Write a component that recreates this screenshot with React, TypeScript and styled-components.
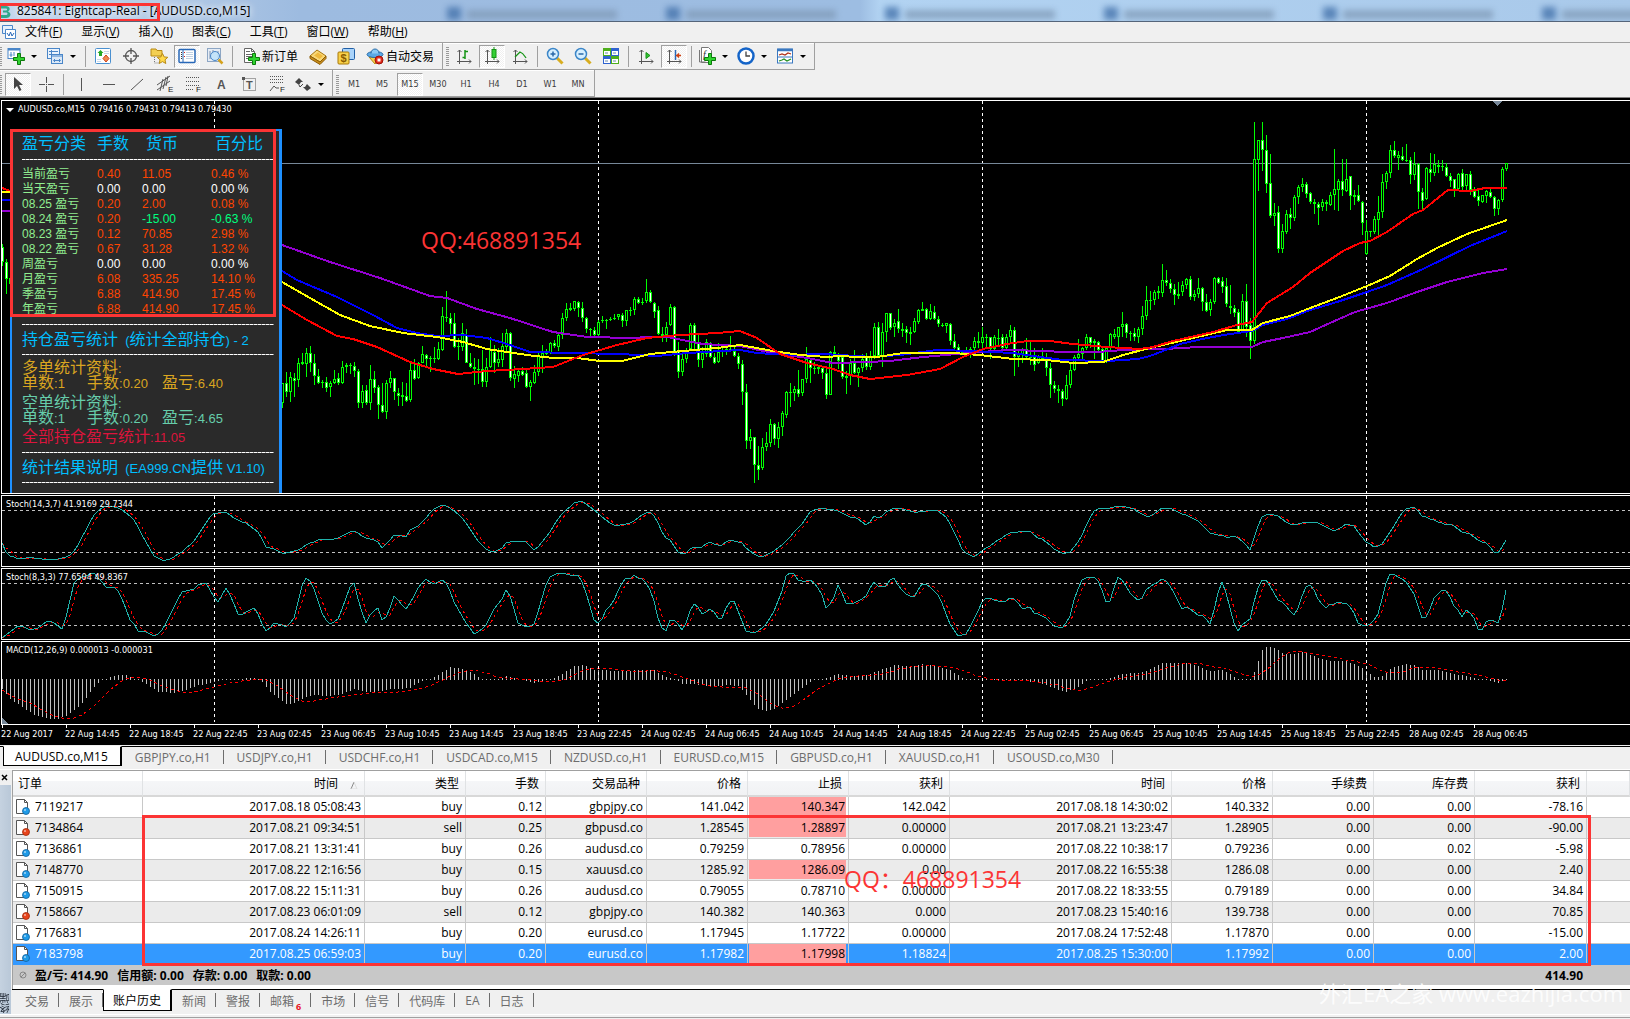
import React from "react";
import styled, { createGlobalStyle, css } from "styled-components";

const UI = '"Open Sans", "Noto Sans CJK SC", sans-serif';
const PANEL = '"Liberation Sans", "Noto Sans CJK SC", sans-serif';
const SMALL = '"DejaVu Sans Condensed", "Noto Sans CJK SC", sans-serif';
const RED = "#fc3434";

const Global = createGlobalStyle`
  *, *::before, *::after { box-sizing: border-box; }
  body { margin: 0; background: #f0f0f0; font-family: ${UI}; font-size: 12px; color: #000; overflow-x: hidden; }
  button { font: inherit; color: inherit; background: none; border: 0; padding: 0; margin: 0; }
`;

/* ------------------------------------------------------------------ data */

type Candle = { x: number; h: number; t: number; b: number; l: number; down: boolean };

// Every bar is "high bodyTop bodyBottom low", a trailing w marks a falling bar.
const BARS: { origin: number; bars: string }[] = [
  {
    origin: 230,
    bars:
      "460 460 520 535,425 460 485 500 w,425 442 487 515,430 443 452 502 w,385 398 450 470,370 395 402 405,353 370 402 440,348 370 398 425 w,373 398 438 465 w,418 438 460 462 w,450 457 460 475,440 455 473 485 w,452 458 472 502,420 446 460 462,430 444 460 465 w,393 410 460 462,398 406 411 428 w,398 404 408 432,396 408 424 440 w,418 424 520 535 w,465 484 520 535,465 480 518 525 w,405 448 518 540,423 448 473 488 w,465 472 526 566 w,460 526 545 550 w,450 460 545 566,423 445 460 475,445 445 485 510 w,475 488 497 527 w,457 496 500 527,460 498 512 515 w,393 420 510 515,388 420 446 450 w,395 398 445 447,348 373 398 398,372 376 386 410 w,378 384 386 425,350 384 386 398,335 358 388 390,230 258 360 362,183 260 265 275,248 265 283 312 w,250 280 352 355 w,325 348 352 390,280 310 350 362,296 315 398 400 w,370 398 412 413 w,385 412 418 465 w,388 416 420 462,360 418 455 472 w,383 412 455 470,320 360 412 415,345 365 400 430 w,355 388 400 412,308 348 390 412,297 310 350 362,307 310 445 452 w,408 432 448 475,420 424 438 455,412 424 434 438 w,420 430 472 473 w,450 456 470 512,405 426 458 462,370 378 426 438,345 370 382 430,358 364 372 375,335 340 368 372,330 340 348 355 w,310 315 350 362,248 265 315 328,220 238 265 272,218 235 240 242,213 213 238 243,213 215 235 262 w,215 235 265 275 w,260 265 298 308 w,293 298 300 320,292 300 316 320 w,270 276 316 318,258 270 274 278,266 270 273 297,260 267 270 273,252 264 268 270,252 253 262 270,248 256 272 290 w,240 241 272 288,230 240 243 258,202 208 240 255,200 208 220 222 w,205 215 220 225,147 186 213 218,180 186 216 220 w,215 218 245 265 w,228 240 312 315 w,290 312 318 335,275 290 316 335,222 232 286 288,228 232 365 377 w,335 360 425 443 w,372 387 425 437,355 370 387 398,280 286 358 360,280 284 340 362 w,310 340 390 410 w,350 370 390 413,328 337 372 380,335 338 380 385 w,368 380 398 402 w,340 365 395 398,345 362 366 380,345 358 363 375,318 357 362 362,350 362 378 382 w,370 378 402 418 w",
  },
  {
    origin: 240,
    bars:
      "360 373 457 495 w,432 457 602 627 w,567 592 604 627,592 592 676 729 w,618 676 690 720 w,594 622 683 690,575 610 620 632,537 553 610 620,549 553 598 615 w,546 562 596 624,513 520 562 588,453 457 524 534,429 457 459 501,438 448 458 483,390 448 461 471 w,417 418 460 468,321 358 418 429,355 360 385 429 w,365 384 387 402,375 382 388 402,380 384 400 417 w,385 400 464 477 w,333 337 464 465,318 337 341 345,338 345 362 387 w,342 352 412 418 w,393 408 413 461,357 370 405 435,330 368 400 402 w,380 384 400 441,342 357 385 396,338 348 382 390 w,333 348 380 390,249 262 348 358,246 262 348 350 w,249 277 348 381,220 220 275 306,220 220 264 270 w,237 248 262 291,207 244 268 279 w,249 267 272 291,258 268 278 309 w,261 276 281 315,234 244 275 279,207 210 247 252,186 207 212 213,204 208 236 240 w,192 214 236 240,198 216 236 240 w,228 236 253 261 w,249 254 257 260,249 250 257 279,249 252 304 315 w,282 304 325 327 w,312 322 340 342 w,333 336 339 345,321 333 337 348,321 326 334 354,291 303 325 330,276 303 310 325,261 290 310 333,282 290 294 325,290 292 326 357 w,285 292 326 330,267 294 297 321,282 292 325 330 w,282 292 325 328,255 271 292 306,261 271 350 408 w,333 343 350 381,324 327 343 369,294 327 352 355 w,306 350 353 375,324 352 374 393 w,345 352 370 372,324 350 356 360,339 352 385 408 w,370 385 436 474 w,423 436 446 459 w,435 446 452 489,447 452 478 498 w,405 436 478 480,366 391 436 444,345 352 390 393,297 342 355 358,321 325 342 363,282 292 325 330,291 292 310 324 w,297 304 308 357,303 305 330 333 w,322 326 366 369 w,322 325 366 369,279 283 325 330,267 283 290 297,261 262 290 321,216 252 262 291,249 252 280 294 w,273 278 281 303,264 280 290 303 w,261 268 290 309,198 229 268 285,138 181 229 240,153 180 183 210,150 155 181 195,138 154 158 177,72 121 158 171,90 119 130 138 w,118 130 146 159 w,132 146 166 195 w,126 163 167 177,123 135 157 168,114 118 135 147",
  },
  {
    origin: 95,
    bars:
      "543 552 607 614 w,585 598 605 618,549 580 596 610,575 580 622 648 w,597 622 648 651 w,612 622 645 663,546 550 622 627,546 548 563 567 w,546 558 575 594 w,549 574 628 636 w,570 633 640 657,630 640 653 666 w,642 650 710 711 w,597 618 710 711,567 619 695 726 w,668 690 738 792 w,81 193 738 747,136 136 196 288,81 136 166 228 w,120 166 268 294 w,177 265 364 369 w,324 355 364 393,333 352 463 474 w,387 409 463 474,345 358 412 417,339 358 368 402 w,300 307 370 378,270 277 306 327,249 268 277 291,261 268 296 309 w,291 295 322 327 w,312 322 328 357,321 328 338 390 w,312 322 337 348,315 322 328 348,291 301 331 333,162 283 301 345,252 259 286 348,192 259 284 303 w,192 253 289 291,243 244 303 345 w,285 301 306 330,270 301 317 321 w,318 322 385 420 w,375 409 478 480,408 409 412 426,363 373 412 417,303 352 376 423,237 262 352 369,228 235 262 282,150 166 233 249,138 166 182 189 w,168 181 190 225,156 184 196 198 w,147 195 198 201,186 196 241 267 w,171 206 241 255,204 208 292 342 w,279 292 317 342 w,216 220 313 315,174 222 235 261 w,177 208 235 243,195 211 215 234,195 214 217 228,204 216 244 246 w,234 244 257 276 w,252 253 283 306 w,234 238 283 288,222 235 275 288 w,237 238 274 291,228 238 284 300 w,276 288 307 309 w,285 303 319 333 w,300 301 322 324,285 289 304 324,282 292 307 309 w,303 307 343 363 w,312 316 343 360,216 222 316 321,204 205 223 228",
  },
];

const FIRST_BAR = 282;
const STEP = 4;

const candles: Candle[] = BARS.flatMap(({ origin, bars }) =>
  bars.split(",").map((bar) => {
    const parts = bar.split(" ");
    const [h, t, b, l] = parts.slice(0, 4).map((v) => Math.round(origin + Number(v) / 3));
    return { h, t, b, l, down: parts[4] === "w", x: 0 };
  })
).map((c, i) => ({ ...c, x: FIRST_BAR + i * STEP }));

const earlyCandles: Candle[] = [
  { x: 2, h: 244, t: 247, b: 262, l: 266, down: true },
  { x: 6, h: 259, t: 262, b: 279, l: 294, down: true },
  { x: 10, h: 276, t: 278, b: 284, l: 286, down: false },
];

const averages = [
  {
    color: "#9400d3",
    points:
      "282,245 330,262 380,278 430,296 447,298 477,309 510,318 553,332 587,337 633,338 647,337 667,337 703,344 740,346 773,353 807,358 833,363 867,362 890,361 923,357 957,354 1007,350 1047,351 1060,352 1098,352 1123,350 1167,349 1180,348 1200,347 1252,347 1263,342 1283,338 1310,332 1330,323 1355,312 1387,303 1417,292 1447,282 1483,273 1507,269",
  },
  {
    color: "#0000ff",
    points:
      "282,271 297,280 337,297 373,315 397,328 417,333 437,336 463,335 487,338 510,345 530,352 570,353 620,354 657,356 687,353 740,350 757,353 790,355 823,354 873,357 900,355 937,350 973,351 1013,353 1040,357 1063,360 1107,361 1138,359 1150,356 1163,351 1180,344 1207,338 1230,334 1252,331 1263,325 1287,319 1310,310 1337,302 1367,292 1387,285 1423,269 1470,246 1507,231",
  },
  {
    color: "#ffff00",
    points:
      "282,282 310,298 340,315 370,326 403,333 437,337 463,342 487,349 527,355 553,358 577,358 600,361 622,361 650,354 683,351 717,348 740,345 773,351 800,355 827,357 840,356 857,357 877,357 903,353 953,353 980,355 1013,359 1047,360 1073,363 1103,362 1123,355 1150,348 1197,337 1227,330 1252,330 1263,323 1290,316 1310,308 1337,298 1367,286 1390,276 1417,259 1437,248 1467,234 1507,220",
  },
  {
    color: "#ff0000",
    points:
      "282,305 307,320 337,336 353,339 377,347 410,362 433,369 458,374 487,371 523,369 553,367 583,355 617,345 647,338 680,335 717,333 740,331 757,338 780,354 807,363 833,369 850,375 870,379 907,375 940,369 963,357 983,349 1007,344 1027,341 1050,341 1073,344 1107,347 1140,349 1153,347 1173,341 1213,332 1237,325 1252,322 1267,303 1293,287 1310,273 1343,251 1360,243 1370,241 1387,232 1413,214 1423,210 1448,190 1470,191 1485,188 1507,188",
  },
];

type Point = [number, number];

// Oscillator tracks are stored in three parts: start, horizontal density and the samples.
const PARTS = [
  { start: 0, density: 2.851 },
  { start: 550, density: 2.904 },
  { start: 1090, density: 2.904 },
];

const track = (parts: string[]): Point[] =>
  parts.flatMap((samples, i) =>
    samples.split(" ").map((s): Point => {
      const [x, y] = s.split(",").map(Number);
      return [PARTS[i].start + x / PARTS[i].density, 490 + y / 3];
    })
  );

const sample = (pts: Point[], x: number) => {
  const i = pts.findIndex((p) => p[0] >= x);
  if (i <= 0) return i === 0 ? pts[0][1] : pts[pts.length - 1][1];
  const [a, b] = [pts[i - 1], pts[i]];
  return b[0] === a[0] ? b[1] : a[1] + ((b[1] - a[1]) * (x - a[0])) / (b[0] - a[0]);
};

const perBar = (pts: Point[]): Point[] =>
  Array.from({ length: 377 }, (_, k): Point => [2 + k * STEP, sample(pts, 2 + k * STEP)]);

const movingAverage = (pts: Point[], n: number): Point[] =>
  pts.map((p, i): Point => {
    const part = pts.slice(Math.max(0, i - n + 1), i + 1);
    return [p[0], part.reduce((sum, q) => sum + q[1], 0) / part.length];
  });

const toPoints = (pts: Point[]) => pts.map((p) => `${Math.round(p[0])},${Math.round(p[1])}`).join(" ");

const slow = perBar(
  track([
    "6,160 15,183 30,198 50,206 90,202 120,207 160,208 190,202 215,180 240,130 270,70 300,48 330,50 360,68 385,92 410,145 440,200 465,212 490,205 520,185 555,152 605,70 640,65 650,68 665,83 705,102 738,128 758,170 780,177 810,191 860,176 880,160 920,146 960,146 985,132 1010,122 1040,142 1075,152 1090,175 1125,133 1160,141 1170,117 1190,110 1240,55 1263,45 1280,52 1320,85 1365,155 1390,182 1410,187 1430,175 1445,157 1460,153 1500,155 1525,184 1560,135",
    "0,125 30,75 70,40 93,34 140,70 170,98 198,108 215,101 235,100 270,72 290,65 305,80 330,138 350,152 370,186 385,193 400,185 412,168 435,177 460,156 495,166 525,150 555,157 575,180 610,203 650,182 670,170 690,147 730,105 760,60 790,54 840,63 865,80 885,80 920,107 942,78 955,85 980,62 1003,52 1030,59 1060,66 1120,58 1150,80 1180,140 1200,186 1230,202 1270,172 1305,148 1340,125 1395,124 1410,140 1430,147 1465,178 1490,190 1512,186 1540,145 1560,100",
    "0,85 12,62 25,55 50,55 85,48 120,54 165,79 180,77 205,55 230,52 270,72 310,90 350,130 365,135 380,133 400,142 420,137 440,150 465,181 485,115 500,80 515,72 545,77 585,106 630,94 665,99 710,123 745,102 765,107 800,155 828,172 850,160 885,105 905,70 920,56 942,52 965,78 1035,105 1048,100 1080,125 1100,130 1130,153 1155,162 1172,185 1187,190 1210,145",
  ])
);

const fast = perBar(
  track([
    "6,443 50,408 70,410 88,422 112,412 125,400 145,391 180,419 195,350 213,270 240,258 268,250 285,270 302,290 330,290 350,330 373,398 385,405 395,425 410,422 443,440 460,425 490,365 518,305 555,295 565,283 588,278 605,315 622,337 645,292 665,335 680,375 695,375 705,362 725,355 740,380 750,412 760,425 783,397 818,412 840,380 860,290 873,262 890,280 920,375 935,400 945,403 965,385 985,330 1000,283 1010,278 1025,345 1045,403 1057,370 1078,355 1090,392 1105,375 1125,313 1145,345 1160,358 1170,335 1185,312 1195,285 1215,268 1238,283 1260,270 1275,280 1298,345 1330,400 1353,433 1385,407 1410,355 1430,330 1445,293 1458,330 1478,402 1502,412 1525,400 1545,325 1562,268",
    "0,260 25,247 60,256 83,254 98,285 128,390 140,400 150,388 165,355 180,345 205,285 222,262 235,268 247,252 258,268 270,268 285,285 303,335 317,400 328,418 338,422 350,385 365,392 385,424 400,385 410,352 420,341 432,352 443,376 466,355 478,368 490,388 500,385 513,350 525,331 537,332 550,375 570,424 595,428 610,420 628,402 650,365 675,300 687,250 708,250 722,274 757,270 778,292 790,315 803,358 825,322 837,282 860,340 875,343 915,322 930,292 942,275 955,290 978,287 990,265 1000,265 1015,292 1037,317 1057,322 1082,278 1095,282 1130,318 1165,410 1187,440 1210,430 1225,400 1258,330 1270,322 1300,333 1325,334 1340,322 1352,328 1372,355 1395,352 1405,368 1440,383 1465,408 1490,415 1510,378 1525,315 1545,270 1562,260",
    "0,260 15,260 30,285 48,340 60,333 72,285 83,256 95,272 117,312 138,332 150,325 165,297 190,280 208,268 220,272 240,300 268,360 280,350 317,378 327,373 350,403 375,295 385,272 397,315 418,400 432,427 443,400 458,393 467,385 480,318 492,280 502,265 515,273 545,328 560,338 593,376 607,348 620,305 632,283 643,284 665,332 687,355 698,340 712,343 723,335 735,342 745,337 768,372 780,402 800,410 818,400 838,370 852,310 862,270 873,250 885,253 920,278 943,315 965,388 980,378 1000,320 1025,298 1037,303 1060,355 1070,360 1081,382 1094,355 1117,387 1129,424 1140,418 1152,393 1163,388 1187,400 1200,345 1210,288",
  ])
);

const macd = perBar(
  track([
    "6,600 30,632 65,655 100,680 130,688 165,690 190,680 215,660 240,635 270,590 290,572 330,555 365,556 385,570 410,582 450,608 490,612 530,603 560,590 610,580 650,570 725,563 740,570 770,610 815,645 840,642 870,625 895,617 930,622 975,615 1010,600 1045,610 1090,605 1120,600 1165,598 1200,578 1240,560 1285,531 1330,540 1375,567 1410,570 1445,558 1470,567 1500,577 1525,582 1560,570",
    "0,567 25,558 70,528 95,525 130,540 210,543 300,539 330,558 360,568 385,586 420,586 470,594 510,588 550,592 580,632 605,662 630,666 655,658 690,630 730,600 765,570 800,566 835,552 870,558 925,553 970,535 1005,524 1045,530 1080,522 1115,528 1160,540 1200,565 1240,570 1340,570 1380,575 1430,584 1465,598 1495,609 1530,598 1562,570",
    "0,567 45,567 100,551 150,548 210,518 290,519 345,543 385,540 430,567 467,575 478,540 500,480 513,471 535,474 560,490 590,494 620,486 660,502 700,514 740,512 785,530 805,545 825,562 845,560 875,535 915,522 945,527 965,540 1020,541 1060,552 1110,562 1140,570 1187,582 1200,572 1210,569",
  ])
);

const DAY_LINES = [214, 598, 982, 1366];

const AXIS = [
  "22 Aug 2017", "22 Aug 14:45", "22 Aug 18:45", "22 Aug 22:45",
  ...["23", "24", "25"].flatMap((d) => ["02", "06", "10", "14", "18", "22"].map((h) => `${d} Aug ${h}:45`)),
  "28 Aug 02:45", "28 Aug 06:45",
];

const STATS: [string, string, string, string, string][] = [
  ["当前盈亏", "0.40", "11.05", "0.46 %", "up"],
  ["当天盈亏", "0.00", "0.00", "0.00 %", "flat"],
  ["08.25 盈亏", "0.20", "2.00", "0.08 %", "up"],
  ["08.24 盈亏", "0.20", "-15.00", "-0.63 %", "down"],
  ["08.23 盈亏", "0.12", "70.85", "2.98 %", "up"],
  ["08.22 盈亏", "0.67", "31.28", "1.32 %", "up"],
  ["周盈亏", "0.00", "0.00", "0.00 %", "flat"],
  ["月盈亏", "6.08", "335.25", "14.10 %", "up"],
  ["季盈亏", "6.88", "414.90", "17.45 %", "up"],
  ["年盈亏", "6.88", "414.90", "17.45 %", "up"],
];

const CHART_TABS = [
  "AUDUSD.co,M15", "GBPJPY.co,H1", "USDJPY.co,H1", "USDCHF.co,H1", "USDCAD.co,M15",
  "NZDUSD.co,H1", "EURUSD.co,M15", "GBPUSD.co,H1", "XAUUSD.co,H1", "USOUSD.co,M30",
];

const COLUMNS: [string, number][] = [
  ["订单", 130], ["时间", 222], ["类型", 101], ["手数", 80], ["交易品种", 101], ["价格", 101], ["止损", 101],
  ["获利", 101], ["时间", 222], ["价格", 101], ["手续费", 101], ["库存费", 101], ["获利", 112],
];

const ORDERS = [
  ["7119217", "2017.08.18 05:08:43", "buy", "0.12", "gbpjpy.co", "141.042", "140.347", "142.042", "2017.08.18 14:30:02", "140.332", "0.00", "0.00", "-78.16"],
  ["7134864", "2017.08.21 09:34:51", "sell", "0.25", "gbpusd.co", "1.28545", "1.28897", "0.00000", "2017.08.21 13:23:47", "1.28905", "0.00", "0.00", "-90.00"],
  ["7136861", "2017.08.21 13:31:41", "buy", "0.26", "audusd.co", "0.79259", "0.78956", "0.00000", "2017.08.22 10:38:17", "0.79236", "0.00", "0.02", "-5.98"],
  ["7148770", "2017.08.22 12:16:56", "buy", "0.15", "xauusd.co", "1285.92", "1286.09", "0.00", "2017.08.22 16:55:38", "1286.08", "0.00", "0.00", "2.40"],
  ["7150915", "2017.08.22 15:11:31", "buy", "0.26", "audusd.co", "0.79055", "0.78710", "0.00000", "2017.08.22 18:33:55", "0.79189", "0.00", "0.00", "34.84"],
  ["7158667", "2017.08.23 06:01:09", "sell", "0.12", "gbpjpy.co", "140.382", "140.363", "0.000", "2017.08.23 15:40:16", "139.738", "0.00", "0.00", "70.85"],
  ["7176831", "2017.08.24 14:26:11", "buy", "0.20", "eurusd.co", "1.17945", "1.17722", "0.00000", "2017.08.24 17:52:48", "1.17870", "0.00", "0.00", "-15.00"],
  ["7183798", "2017.08.25 06:59:03", "buy", "0.20", "eurusd.co", "1.17982", "1.17998", "1.18824", "2017.08.25 15:30:00", "1.17992", "0.00", "0.00", "2.00"],
];
const STOPPED = [0, 1, 3, 7];
const SELECTED = 7;

/* ---------------------------------------------------------------- window */

const Window = styled.div`
  display: flex;
  flex-direction: column;
  min-height: 100vh;
  position: relative;
  overflow: hidden;
`;

const TitleBar = styled.header`
  position: relative;
  display: flex;
  align-items: center;
  height: 22px;
  overflow: hidden;
  border-bottom: 1px solid #55657a;
  background: linear-gradient(90deg, #c3d6ec 0, #b4cbe6 160px, #9dbbe0 300px, #9dbde2 860px, #b2d3f2 880px, #a9c9ea 100%);
`;

const GhostTabs = styled.div`
  position: absolute;
  inset: 7px 0 0 447px;
  display: flex;
  filter: blur(3px);
  opacity: 0.75;
`;

const GhostTab = styled.div`
  flex: none;
  width: 219px;
  display: flex;
  gap: 6px;
  &::before { content: ""; width: 14px; height: 13px; background: #3f6ea8; }
  &::after { content: ""; width: 150px; height: 9px; margin-top: 3px; background: #7f99b6; }
`;

const Title = styled.h1`
  position: relative;
  margin: 0;
  padding: 0 8px 0 17px;
  font-size: 12px;
  font-weight: 400;
  line-height: 20px;
  word-break: keep-all;
  text-shadow: 0 0 6px #fff, 0 0 8px #fff;
`;

const TitleLogo = styled.svg`
  position: absolute;
  left: 0;
  top: 4px;
`;

const TitleMark = styled.div`
  position: absolute;
  left: 0;
  top: 3px;
  width: 160px;
  height: 19px;
  border: 3px solid ${RED};
  border-left-width: 1px;
`;

const MenuBar = styled.nav`
  display: flex;
  align-items: center;
  height: 21px;
  border-bottom: 1px solid #a0a0a0;
`;

const MenuList = styled.div`
  display: flex;
  gap: 19px;
  padding-left: 7px;
`;

const MenuItem = styled.button`
  line-height: 18px;
  u { text-underline-offset: 1px; }
`;

const ToolRow = styled.div<{ $low?: boolean }>`
  display: flex;
  height: 27px;
  ${(p) => p.$low && css`${ToolGroup} { padding-top: 2px; }`}
`;

const ToolGroup = styled.div`
  display: flex;
  align-items: center;
  padding-right: 2px;
  border-right: 1px solid #a0a0a0;
  border-bottom: 1px solid #a0a0a0;
  box-shadow: inset 0 1px 0 #fff;
`;

const Grip = styled.span<{ $wide?: boolean }>`
  width: ${(p) => (p.$wide ? 7 : 4)}px;
  height: 19px;
  background: repeating-linear-gradient(#999 0 1px, transparent 1px 2px) ${(p) => (p.$wide ? 3 : -1)}px 0 / 3px 100% no-repeat;
`;

const Divider = styled.span`
  width: 7px;
  height: 21px;
  background: linear-gradient(#a0a0a0, #a0a0a0) 3px 0 / 1px 100% no-repeat;
`;

const ToolButton = styled.button<{ $pressed?: boolean; $width?: number; $drop?: boolean }>`
  display: flex;
  align-items: center;
  justify-content: ${(p) => (p.$drop ? "flex-start" : "center")};
  gap: 2px;
  width: ${(p) => p.$width ?? 26}px;
  height: 23px;
  margin: 0 1px;
  padding-left: ${(p) => (p.$drop ? 1 : 0)}px;
  white-space: nowrap;
  border: 1px solid transparent;
  ${(p) =>
    p.$pressed &&
    css`
      border-color: #a0a0a0 #fff #fff #a0a0a0;
      background: repeating-conic-gradient(#fff 0 25%, #f0f0f0 0 50%) 0 0 / 2px 2px;
    `}
`;

const PeriodButton = styled(ToolButton)`
  font-family: ${SMALL};
  font-size: 9px;
  color: #3c3c3c;
`;

const Caret = styled.i`
  margin-left: 4px;
  border: 3px solid transparent;
  border-top-color: #000;
  border-bottom: 0;
`;

/* ----------------------------------------------------------------- chart */

const ChartArea = styled.main`
  display: flex;
  flex-direction: column;
  gap: 1px;
  padding: 2px 0 0 1px;
  border-top: 1px solid #808080;
  background: #000;
  color: #fff;
  overflow: hidden;
`;

const Pane = styled.section<{ $height: number }>`
  position: relative;
  height: ${(p) => p.$height}px;
  border: solid #fff;
  border-width: 1px 0 1px 1px;
  overflow: hidden;
`;

const PaneSvg = styled.svg`
  display: block;
  width: 100%;
  height: 100%;
  shape-rendering: crispEdges;
`;

const PaneTitle = styled.h2`
  position: absolute;
  left: 4px;
  top: 2px;
  display: flex;
  align-items: center;
  gap: 4px;
  margin: 0;
  font-family: ${SMALL};
  font-size: 9px;
  font-weight: 400;
  line-height: 13px;
`;

const TitleArrow = styled.i`
  border: 4px solid transparent;
  border-top-color: #fff;
  border-bottom: 0;
`;

const TimeAxis = styled.div`
  display: flex;
  height: 20px;
  margin-top: -1px;
  overflow: hidden;
`;

const TimeLabel = styled.span`
  flex: none;
  width: 64px;
  font-family: ${SMALL};
  font-size: 9px;
  line-height: 12px;
  white-space: nowrap;
  &::before { content: ""; display: block; width: 1px; height: 3px; margin-left: 1px; background: #fff; }
`;

const Contact = styled.p<{ $x: number; $y: number }>`
  position: absolute;
  left: ${(p) => p.$x}px;
  top: ${(p) => p.$y}px;
  margin: 0;
  font-size: 23px;
  line-height: 32px;
  white-space: nowrap;
  color: ${RED};
`;

/* ----------------------------------------------------------- stats panel */

const Panel = styled.aside`
  position: absolute;
  left: 8px;
  top: 28px;
  bottom: 0;
  width: 272px;
  padding-left: 10px;
  border: solid #1e90ff;
  border-width: 2px 3px 0 2px;
  background: #2a2a2a;
  font-family: ${PANEL};
  overflow: hidden;
`;

const PanelMark = styled.div`
  position: absolute;
  left: 8px;
  top: 28px;
  width: 266px;
  height: 188px;
  border: 3px solid ${RED};
`;

const Dashes = styled.hr`
  width: 252px;
  height: 1px;
  margin: 0;
  border: 0;
  background: repeating-linear-gradient(90deg, #fff 0 3px, #999 3px 4px);
`;

const StatsTable = styled.table`
  width: 251px;
  table-layout: fixed;
  border-collapse: collapse;
  font-size: 12px;
  margin-bottom: 7px;
  th, td { padding: 0; text-align: left; font-weight: 400; white-space: nowrap; }
`;

const StatsHead = styled.th<{ $inset?: boolean }>`
  height: 28px;
  font-size: 16px;
  line-height: 26px;
  vertical-align: top;
  color: #00bfff;
  && { padding-left: ${(p) => (p.$inset ? 4 : 0)}px; }
`;

const tone: Record<string, string> = { up: "#ff4500", flat: "#fff", down: "#00ff7f" };

const StatCell = styled.td<{ $tone: string }>`
  height: 15px;
  line-height: 15px;
  color: ${(p) => tone[p.$tone]};
`;

const StatName = styled.th`
  height: 15px;
  line-height: 15px;
  color: #90ee90;
`;

const DashRow = styled.td`
  height: 8px;
  vertical-align: top;
  line-height: 1px;
`;

const PanelHeading = styled.h3`
  margin: 0;
  font-size: 16px;
  font-weight: 400;
  line-height: 29px;
  white-space: pre;
  color: #00bfff;
`;

const Latin = styled.span`
  font-size: 13px;
  line-height: 0;
`;

const Summary = styled.div<{ $color: string }>`
  margin-top: 5px;
  color: ${(p) => p.$color};
`;

const SummaryRow = styled.div`
  display: grid;
  grid-template-columns: 65px 75px 1fr;
  font-size: 16px;
  line-height: 15px;
  white-space: nowrap;
`;

const Total = styled(Summary)`
  margin: 4px 0 7px;
  font-size: 16px;
  line-height: 16px;
`;

/* ------------------------------------------------------------------ tabs */

const ChartTabs = styled.nav`
  display: flex;
  height: 24px;
  margin-top: 1px;
  padding-left: 3px;
  border-top: 1px solid #000;
  box-shadow: inset 0 -1px 0 #fff;
`;

const tabBase = css<{ $active?: boolean }>`
  display: flex;
  align-items: center;
  white-space: nowrap;
  color: #6d6d6d;
  background: linear-gradient(#6d6d6d, #6d6d6d) 100% 3px / 1px 14px no-repeat;
  ${(p) =>
    p.$active &&
    css`
      margin-top: -1px;
      color: #000;
      background: #fff;
      border: 1px solid #000;
      border-top-color: #fff;
      border-right-width: 2px;
    `}
`;

const ChartTab = styled.button<{ $active?: boolean }>`
  ${tabBase}
  height: ${(p) => (p.$active ? 20 : 19)}px;
  padding: 1px ${(p) => (p.$active ? 12 : 13)}px 0 ${(p) => (p.$active ? 11 : 13)}px;
`;

/* ------------------------------------------------------------------ dock */

const Dock = styled.section`
  position: relative;
  display: grid;
  grid-template-columns: 12px minmax(0, 1fr);
`;

const Side = styled.div`
  display: flex;
  flex-direction: column;
  align-items: flex-start;
`;

const CloseButton = styled.button`
  height: 15px;
  padding-left: 1px;
  display: flex;
  align-items: center;
`;

const SideLabel = styled.div`
  flex: 1;
  width: 11px;
  display: flex;
  padding-top: 1px;
  writing-mode: vertical-rl;
  transform: rotate(180deg);
  font-size: 10px;
  line-height: 11px;
  color: #1c2430;
  background: linear-gradient(270deg, #c5d2e0, #b9c8d8);
`;

const Main = styled.div`
  border-top: 1px solid #a0a0a0;
  border-left: 1px solid #a0a0a0;
  background: #fff;
`;

const Orders = styled.table`
  width: 100%;
  table-layout: fixed;
  border-collapse: separate;
  border-spacing: 0;
  text-align: right;
  white-space: nowrap;
  th, td { font-weight: 400; }
`;

const HeadCell = styled.th<{ $first?: boolean }>`
  height: 26px;
  padding: 2px 6px 0 5px;
  line-height: 20px;
  text-align: ${(p) => (p.$first ? "left" : "right")};
  border-right: 1px solid #e0e2e4;
  border-bottom: 2px solid #d8d8d8;
  background: linear-gradient(#fff 0 40%, #f5f6f8 40%, #f1f2f4);
`;

const SortMark = styled.svg`
  margin: 0 0 -1px 12px;
`;

const Row = styled.tr<{ $odd: boolean; $selected: boolean }>`
  background: ${(p) => (p.$selected ? "#3399ff" : p.$odd ? "#ebebeb" : "#fff")};
  color: ${(p) => (p.$selected ? "#fff" : "#000")};
`;

const Cell = styled.td<{ $hit?: boolean; $blank?: boolean }>`
  height: 21px;
  padding: 0 3px 0 0;
  line-height: 18px;
  border-right: ${(p) => (p.$blank ? 0 : 1)}px solid #c8c8c8;
  border-bottom: 1px solid #c8c8c8;
  tr:last-child > & { border-bottom-color: #3399ff; }
  ${(p) =>
    p.$hit &&
    css`
      color: #000;
      background: linear-gradient(#ff9f9f, #ff9f9f) 1px 0 / calc(100% - 3px) 19px no-repeat;
    `}
`;

const Ticket = styled.span`
  display: flex;
  align-items: center;
  gap: 5px;
  padding-left: 3px;
`;

const Balance = styled.div`
  display: flex;
  align-items: center;
  height: 20px;
  padding-left: 6px;
  gap: 8px;
  font-weight: 700;
  background: #c8c8c8;
`;

const BalanceItems = styled.span`
  display: flex;
  gap: 9px;
`;

const BalanceTotal = styled.span`
  margin-left: auto;
  padding-right: 47px;
`;

const DockTabs = styled.nav`
  display: flex;
  height: 25px;
  margin: 4px 0 0 -1px;
  padding-left: 3px;
  border-top: 1px solid #000;
  background: #f0f0f0;
`;

const DockTab = styled.button<{ $active?: boolean }>`
  ${tabBase}
  height: ${(p) => (p.$active ? 22 : 21)}px;
  padding: 0 ${(p) => (p.$active ? 9 : 10)}px;
`;

const Count = styled.sub`
  margin-left: 2px;
  font-size: 9px;
  font-weight: 700;
  line-height: 9px;
  align-self: flex-end;
  color: #e81123;
`;

const StatusLine = styled.footer`
  flex: 1;
  min-height: 5px;
  border-top: 1px solid #fff;
  box-shadow: inset 0 2px 0 #f0f0f0, inset 0 3px 0 #a0a0a0;
`;

const OrdersMark = styled.div`
  position: absolute;
  left: 142px;
  top: 45px;
  width: 1449px;
  height: 151px;
  border: 3px solid ${RED};
`;

const Watermark = styled.p`
  position: absolute;
  right: 7px;
  bottom: 12px;
  margin: 0;
  font-size: 22px;
  line-height: 28px;
  white-space: nowrap;
  color: rgba(255, 255, 255, 0.85);
`;

/* ----------------------------------------------------------------- icons */

const Icon = ({ children, size = 18 }: { children: React.ReactNode; size?: number }) => (
  <svg width={size} height={size} viewBox="0 0 18 18" aria-hidden="true">
    {children}
  </svg>
);

const Plus = () => (
  <path d="M10.5 6.500h3v4h4v3h-4v4h-3v-4h-4v-3h4z" fill="#2fd32f" stroke="#0b7a0b" />
);

const AxisLines = () => (
  <path d="M4.500 3v14M2 14.500h14M2.500 5l2-2 2 2M14 12.500l2 2-2 2" fill="none" stroke="#555" />
);

const icons: Record<string, React.ReactNode> = {
  newChart: (
    <Icon>
      <rect x="1" y="1.500" width="12" height="10" fill="#fff" stroke="#4a86c8" />
      <path d="M1 2.500h12" stroke="#4a86c8" strokeWidth="2" />
      <path d="M4 5v5M2.500 8h3M7 5v4" stroke="#4a86c8" />
      <Plus />
    </Icon>
  ),
  windows: (
    <Icon>
      <rect x="1.500" y="1.500" width="12" height="10" fill="#eaf3fd" stroke="#4a86c8" />
      <path d="M3 4.500h9M5.500 3v5M3 7.500h8" stroke="#4a86c8" />
      <rect x="5.500" y="7.500" width="11" height="9" fill="#dbe9f8" stroke="#4a86c8" />
      <path d="M6 9h10M8 13.500h6M9 12l-1.500 1.500L9 15M13 12l1.500 1.500L13 15" fill="none" stroke="#4a86c8" />
    </Icon>
  ),
  market: (
    <Icon>
      <rect x="1.500" y="1.500" width="15" height="15" rx="1" fill="#fff" stroke="#4a90d0" />
      <path d="M10 4.500h5M10 6.500h5M3 12.500h4M3 14.500h4" stroke="#c9d9ea" />
      <path d="M6.500 3l3 3h-1.500v3h-3V6H3.500z" fill="#25a825" />
      <path d="M12 8l3 3.500-3 3.500-3-3.500z" fill="#f08a50" stroke="#d0431a" />
    </Icon>
  ),
  target: (
    <Icon>
      <circle cx="9" cy="9" r="5.500" fill="none" stroke="#555" strokeWidth="1.300" />
      <path d="M9 1v6M9 11v6M1 9h6M11 9h6" stroke="#555" strokeWidth="1.300" />
    </Icon>
  ),
  favourites: (
    <Icon>
      <path d="M1 2h5l1 1.500h5V9H1z" fill="#f3cf52" stroke="#b88a14" />
      <path d="M4.500 10v6h5" fill="none" stroke="#777" strokeDasharray="1 1" />
      <path d="M12.500 6.500l1.600 3.400 3.700.4-2.800 2.500.8 3.700-3.300-1.900-3.300 1.900.8-3.700-2.800-2.500 3.700-.4z" fill="#ffd94a" stroke="#b88a14" />
    </Icon>
  ),
  navigator: (
    <Icon>
      <rect x="1" y="2.500" width="16" height="13" rx="1" fill="#fff" stroke="#2868b8" strokeWidth="1.500" />
      <path d="M5 3v12" stroke="#2868b8" />
      <path d="M8 5.500h7M8 7.500h7M8 9.500h7M8 11.500h7" stroke="#c0d0e2" />
      <path d="M3 5.500h1M3 7.500h1M3 9.500h1M3 11.500h1" stroke="#333" />
      <path d="M6 5.500h1M6 9.500h1" stroke="#e02020" />
    </Icon>
  ),
  tester: (
    <Icon>
      <rect x="1.500" y="1.500" width="13" height="13" fill="#e5ecf5" stroke="#8da6c4" />
      <path d="M4 4v8M7 3v4M12 4v7" stroke="#7d92ae" />
      <circle cx="9" cy="9" r="4.500" fill="#bfe3fa" fillOpacity=".85" stroke="#4a86c8" />
      <path d="M12.500 12.500l4 4" stroke="#d5a21e" strokeWidth="2.500" />
    </Icon>
  ),
  order: (
    <Icon>
      <path d="M2.500 1.500h7l3 3v11h-10z" fill="#fff" stroke="#666" />
      <path d="M9.500 1.500v3h3M4 4.500h4M4 7.500h6M4 9.500h6M4 11.500h3" fill="none" stroke="#666" />
      <Plus />
    </Icon>
  ),
  gold: (
    <Icon>
      <path d="M1 9l7-6 9 6-6 6z" fill="#f9d877" stroke="#a8750c" />
      <path d="M1 9l10 6 6-6v2.500L11 17.500 1 11.500z" fill="#c98d1a" stroke="#8c5c06" />
      <path d="M5 8.500l4-3 5 3.500-3.500 3z" fill="#f0b93c" />
    </Icon>
  ),
  dollar: (
    <Icon>
      <rect x="5.500" y="1.500" width="12" height="11" rx="1" fill="#a9d3fa" stroke="#215fa6" />
      <rect x="1" y="5" width="11" height="12" rx="1" fill="#f8d14a" stroke="#a87808" />
      <text x="3.500" y="15" fontFamily="Liberation Sans" fontWeight="700" fontSize="11" fill="#8a5c00">$</text>
    </Icon>
  ),
  robot: (
    <Icon>
      <path d="M3 10l6 7 6-7z" fill="#f5cf4c" stroke="#b88a14" />
      <ellipse cx="9" cy="7.500" rx="8" ry="3" fill="#5ba9e6" stroke="#276aa6" />
      <path d="M5 6.500c0-6 8-6 8 0" fill="#8ccaf5" stroke="#276aa6" />
      <circle cx="13" cy="13" r="4" fill="#e02a1a" stroke="#a01208" />
      <rect x="11.500" y="11.500" width="3" height="3" fill="#fff" />
    </Icon>
  ),
  bars: (
    <Icon>
      <AxisLines />
      <path d="M10 3v9M10 4.500h3M7.500 10.500H10" stroke="#149414" strokeWidth="1.500" />
    </Icon>
  ),
  candle: (
    <Icon>
      <AxisLines />
      <path d="M11 0v13" stroke="#149414" />
      <rect x="9" y="2.500" width="4" height="8" fill="#34d034" stroke="#149414" />
    </Icon>
  ),
  line: (
    <Icon>
      <AxisLines />
      <path d="M4 10l5-5c3 1 4 3 6 6" fill="none" stroke="#149414" strokeWidth="1.300" />
    </Icon>
  ),
  zoomIn: (
    <Icon>
      <path d="M11 11l5.500 5.500" stroke="#d8ad20" strokeWidth="3" />
      <circle cx="7" cy="7" r="5.500" fill="#d6efff" stroke="#3c86c8" strokeWidth="1.500" />
      <path d="M4.500 7h5M7 4.500v5" stroke="#2868a8" strokeWidth="1.500" />
    </Icon>
  ),
  zoomOut: (
    <Icon>
      <path d="M11 11l5.500 5.500" stroke="#d8ad20" strokeWidth="3" />
      <circle cx="7" cy="7" r="5.500" fill="#d6efff" stroke="#3c86c8" strokeWidth="1.500" />
      <path d="M4.500 7h5" stroke="#2868a8" strokeWidth="1.500" />
    </Icon>
  ),
  tile: (
    <Icon>
      <path d="M1 1h8v8H1zM9 9h8v8H9z" fill="#4fae1c" />
      <path d="M9 1h8v8H9zM1 9h8v8H1z" fill="#2f62d0" />
      <path d="M2 4h6v4H2zM10 4h6v4h-6zM2 12h6v4H2zM10 12h6v4h-6z" fill="#fff" />
      <path d="M3 6h3M11 6h3M3 14h3M11 14h3" stroke="#6a8ab0" />
    </Icon>
  ),
  scroll: (
    <Icon>
      <AxisLines />
      <path d="M9 5.500l4 3-4 3z" fill="#34c034" stroke="#149414" />
    </Icon>
  ),
  shift: (
    <Icon>
      <AxisLines />
      <path d="M10.500 3v10" stroke="#2868b8" strokeWidth="1.500" />
      <path d="M11 8.500h5M14 6.500l-2 2 2 2" fill="none" stroke="#d04010" strokeWidth="1.300" />
    </Icon>
  ),
  indicator: (
    <Icon>
      <path d="M3.500.5h7l3 3v12h-10z" fill="#fff" stroke="#777" />
      <path d="M1.500 3v12h6" fill="none" stroke="#777" />
      <text x="5" y="11" fontFamily="Liberation Serif" fontStyle="italic" fontSize="10" fill="#333">f</text>
      <Plus />
    </Icon>
  ),
  clock: (
    <Icon>
      <circle cx="9" cy="9" r="7.500" fill="#fff" stroke="#1464c8" strokeWidth="2.500" />
      <path d="M9 4.500V9h4" fill="none" stroke="#444" strokeWidth="1.300" />
    </Icon>
  ),
  template: (
    <Icon>
      <rect x="1.500" y="2" width="15" height="14" fill="#fff" stroke="#3a78c0" />
      <path d="M1.500 3h15" stroke="#3a78c0" strokeWidth="2.500" />
      <path d="M3 8l3-1 3 1 3-2 3 1" fill="none" stroke="#b03018" strokeWidth="1.300" />
      <path d="M2 10h14" stroke="#3a78c0" />
      <path d="M3 14l3-1 2-1 3 2 4-2" fill="none" stroke="#249024" strokeWidth="1.300" />
    </Icon>
  ),
  cursor: (
    <Icon>
      <path d="M5 2v12l3-3 2.500 5 2-1-2.500-5h4z" fill="#444" />
    </Icon>
  ),
  cross: (
    <Icon>
      <path d="M9.500 2v6M9.500 11v6M2 9.500h6M11 9.500h6M9 9.500h1" stroke="#555" />
    </Icon>
  ),
  vline: (
    <Icon>
      <path d="M9.500 3v13" stroke="#555" />
    </Icon>
  ),
  hline: (
    <Icon>
      <path d="M3 9.500h12" stroke="#555" />
    </Icon>
  ),
  trend: (
    <Icon>
      <path d="M3 15L15 4" stroke="#555" />
    </Icon>
  ),
  channel: (
    <Icon>
      <path d="M1 10L14 1M1 15L14 6M4 16l3-12M7 14l3-12M10 11l2-10" stroke="#555" />
      <text x="12" y="17" fontFamily="Liberation Sans" fontSize="8" fill="#222">E</text>
    </Icon>
  ),
  fibo: (
    <Icon>
      <path d="M2 2.500h13M2 6.500h13M2 10.500h13M2 14.500h8" stroke="#555" strokeDasharray="1 1" />
      <text x="12" y="17" fontFamily="Liberation Sans" fontSize="8" fill="#222">F</text>
    </Icon>
  ),
  text: (
    <Icon>
      <text x="5" y="14" fontFamily="Liberation Sans" fontWeight="700" fontSize="12" fill="#555">A</text>
    </Icon>
  ),
  label: (
    <Icon>
      <rect x="3.500" y="3.500" width="12" height="12" fill="none" stroke="#555" strokeDasharray="1 1" />
      <path d="M2 2h3v3H2z" fill="#555" />
      <text x="6" y="14" fontFamily="Liberation Sans" fontWeight="700" fontSize="11" fill="#555">T</text>
    </Icon>
  ),
  fiboTime: (
    <Icon>
      <path d="M2 1.500h14M2 4.500h14M2 7.500h14" stroke="#555" strokeDasharray="1 1" />
      <path d="M2 16l4-5 2 2h3" fill="none" stroke="#555" />
      <text x="12" y="17" fontFamily="Liberation Sans" fontSize="8" fill="#222">F</text>
    </Icon>
  ),
  arrows: (
    <Icon>
      <path d="M5 3l4 4H7l-2 3-4-3zM13 16l-4-4h2l2-3 4 4z" fill="#444" />
      <path d="M5 10l1 2 3-3" fill="none" stroke="#444" />
    </Icon>
  ),
};

const Tool = ({ icon, label, pressed, drop, caption, width }: {
  icon: string; label: string; pressed?: boolean; drop?: boolean; caption?: string; width?: number;
}) => (
  <ToolButton type="button" aria-label={label} aria-pressed={pressed} $pressed={pressed} $drop={drop} $width={drop ? 37 : width}>
    {icons[icon]}
    {caption}
    {drop && <Caret />}
  </ToolButton>
);

const Doc = ({ sell }: { sell: boolean }) => (
  <svg width="14" height="16" viewBox="0 0 14 16" aria-hidden="true">
    <path d="M.5.5h8l3 3v11H.5z" fill="#fff" stroke="#555" />
    <path d="M8.500.5v3h3" fill="none" stroke="#555" />
    <circle cx="10" cy="12" r="3.500" fill={sell ? "#e8441c" : "#1e9be8"} stroke={sell ? "#a02808" : "#0f5f9a"} strokeWidth=".8" />
    <circle cx="9" cy="11" r="1" fill="#fff" fillOpacity=".6" />
  </svg>
);

/* ---------------------------------------------------------- chart pieces */

const Bar = ({ c }: { c: Candle }) => {
  const height = Math.max(1, c.b - c.t);
  return (
    <>
      <rect x={c.x} y={c.h} width="1" height={Math.max(1, c.l - c.h)} fill="#00ff00" />
      <rect x={c.x - 1} y={c.t} width="3" height={height} fill="#00ff00" />
      {height > 2 && <rect x={c.x} y={c.t + 1} width="1" height={height - 2} fill={c.down ? "#fff" : "#000"} />}
    </>
  );
};

const DayLines = ({ top, bottom }: { top: number; bottom: number }) => (
  <>
    {DAY_LINES.map((x) => (
      <path key={x} d={`M${x + 0.5} ${top}V${bottom}`} stroke="#fff" strokeDasharray="3 3" />
    ))}
  </>
);

const Oscillator = ({ title, top, data, levels }: { title: string; top: number; data: Point[]; levels: number[] }) => (
  <Pane $height={72}>
    <PaneSvg role="img" aria-label={title}>
      <g transform={`translate(-2 ${-top})`}>
        {levels.map((y) => (
          <path key={y} d={`M2 ${y + 0.5}H4000`} stroke="#c0c0c0" strokeDasharray="3 3" />
        ))}
        <polyline points={toPoints(movingAverage(data, 3))} fill="none" stroke="#ff0000" strokeDasharray="3 3" />
        <polyline points={toPoints(data)} fill="none" stroke="#20b2aa" />
        <DayLines top={top} bottom={top + 72} />
      </g>
    </PaneSvg>
    <PaneTitle>{title}</PaneTitle>
  </Pane>
);

const ZERO = 680;

const Macd = () => (
  <Pane $height={84}>
    <PaneSvg role="img" aria-label="MACD">
      <g transform="translate(-2 -642)">
        {macd.map(([x, y]) => (
          <rect key={x} x={x} y={Math.min(ZERO - 1, Math.round(y))} width="1" height={Math.max(1, Math.abs(Math.round(y) - ZERO))} fill="#c0c0c0" />
        ))}
        <polyline points={toPoints(movingAverage(macd, 9))} fill="none" stroke="#ff0000" strokeDasharray="3 3" />
        <DayLines top={642} bottom={722} />
        <path d="M2 718v6h6z" fill="#778899" />
      </g>
    </PaneSvg>
    <PaneTitle>MACD(12,26,9) 0.000013 -0.000031</PaneTitle>
  </Pane>
);

const StatsPanel = () => (
  <Panel>
    <StatsTable>
      <colgroup>
        <col width={75} />
        <col width={45} />
        <col width={69} />
        <col />
      </colgroup>
      <thead>
        <tr>
          <StatsHead>盈亏分类</StatsHead>
          <StatsHead>手数</StatsHead>
          <StatsHead $inset>货币</StatsHead>
          <StatsHead $inset>百分比</StatsHead>
        </tr>
      </thead>
      <tbody>
        <tr>
          <DashRow colSpan={4}><Dashes /></DashRow>
        </tr>
        {STATS.map(([name, lots, money, percent, kind]) => (
          <tr key={name}>
            <StatName scope="row">{name}</StatName>
            <StatCell $tone={kind === "down" ? "up" : kind}>{lots}</StatCell>
            <StatCell $tone={kind}>{money}</StatCell>
            <StatCell $tone={kind}>{percent}</StatCell>
          </tr>
        ))}
      </tbody>
    </StatsTable>
    <Dashes />
    <PanelHeading>持仓盈亏统计<Latin>  (</Latin>统计全部持仓<Latin>) - 2</Latin></PanelHeading>
    <Dashes />
    <Summary $color="#daa520">
      <SummaryRow><span>多单统计资料<Latin>:</Latin></span></SummaryRow>
      <SummaryRow>
        <span>单数<Latin>:1</Latin></span>
        <span>手数<Latin>:0.20</Latin></span>
        <span>盈亏<Latin>:6.40</Latin></span>
      </SummaryRow>
    </Summary>
    <Summary $color="#66cdaa">
      <SummaryRow><span>空单统计资料<Latin>:</Latin></span></SummaryRow>
      <SummaryRow>
        <span>单数<Latin>:1</Latin></span>
        <span>手数<Latin>:0.20</Latin></span>
        <span>盈亏<Latin>:4.65</Latin></span>
      </SummaryRow>
    </Summary>
    <Total $color="#dc143c">全部持仓盈亏统计<Latin>:11.05</Latin></Total>
    <Dashes />
    <PanelHeading>统计结果说明<Latin>  (EA999.CN</Latin>提供<Latin> V1.10)</Latin></PanelHeading>
    <Dashes />
  </Panel>
);

/* ------------------------------------------------------------------- app */

const MENUS: [string, string][] = [
  ["文件", "F"], ["显示", "V"], ["插入", "I"], ["图表", "C"], ["工具", "T"], ["窗口", "W"], ["帮助", "H"],
];

const DOCK_TABS = ["交易", "展示", "账户历史", "新闻", "警报", "邮箱", "市场", "信号", "代码库", "EA", "日志"];

export default function App() {
  return (
    <Window>
      <Global />
      <TitleBar>
        <GhostTabs aria-hidden="true">
          {[0, 1, 2, 3, 4, 5].map((n) => <GhostTab key={n} />)}
        </GhostTabs>
        <TitleLogo width="12" height="16" viewBox="0 0 12 16" aria-hidden="true">
          <path d="M1 2h5c4 0 5 4 2 5.500 4 1.500 3 6.500-2 6.500H1v-3h5c2 0 2-2.500 0-2.500H3v-2h3c1.500 0 1.500-2 0-2H1z" fill="#2fa98c" />
        </TitleLogo>
        <Title>825841: Eightcap-Real - [AUDUSD.co,M15]</Title>
        <TitleMark />
      </TitleBar>

      <MenuBar>
        <svg width="18" height="16" viewBox="0 0 18 16" aria-hidden="true">
          <path d="M2.500 1.500h10v8h-10z" fill="#e6f0fb" stroke="#4a86c8" />
          <path d="M5.500 5.500h10v9h-10z" fill="#fff" stroke="#4a86c8" />
          <path d="M7 9l2 3 1.500-4 1.500 4 2-3" fill="none" stroke="#2868b8" />
        </svg>
        <MenuList>
          {MENUS.map(([name, key]) => (
            <MenuItem key={key} type="button">{name}(<u>{key}</u>)</MenuItem>
          ))}
        </MenuList>
      </MenuBar>

      <ToolRow>
        <ToolGroup>
          <Grip />
          <Tool icon="newChart" label="新图表" drop />
          <Tool icon="windows" label="窗口布局" drop />
          <Divider />
          <Tool icon="market" label="市场报价" />
          <Tool icon="target" label="数据窗口" />
          <Tool icon="favourites" label="导航" />
          <Tool icon="navigator" label="终端" pressed />
          <Tool icon="tester" label="策略测试" />
          <Divider />
          <Tool icon="order" label="新订单" caption="新订单" width={66} />
          <Tool icon="gold" label="编辑器" />
          <Tool icon="dollar" label="信号" />
          <Tool icon="robot" label="自动交易" caption="自动交易" width={78} />
        </ToolGroup>
        <ToolGroup>
          <Grip $wide />
          <Tool icon="bars" label="柱状图" />
          <Tool icon="candle" label="阴阳烛" pressed />
          <Tool icon="line" label="折线图" />
          <Divider />
          <Tool icon="zoomIn" label="放大" />
          <Tool icon="zoomOut" label="缩小" />
          <Tool icon="tile" label="平铺窗口" />
          <Divider />
          <Tool icon="scroll" label="自动滚动" />
          <Tool icon="shift" label="图表平移" pressed />
          <Divider />
          <Tool icon="indicator" label="技术指标" drop />
          <Tool icon="clock" label="时间周期" drop />
          <Tool icon="template" label="模板" drop />
        </ToolGroup>
      </ToolRow>

      <ToolRow $low>
        <ToolGroup>
          <Grip />
          <Tool icon="cursor" label="光标" pressed />
          <Tool icon="cross" label="十字准线" />
          <Divider />
          <Tool icon="vline" label="垂直线" />
          <Tool icon="hline" label="水平线" />
          <Tool icon="trend" label="趋势线" />
          <Tool icon="channel" label="等距通道" />
          <Tool icon="fibo" label="斐波纳契回调线" />
          <Tool icon="text" label="文字" />
          <Tool icon="label" label="文字标签" />
          <Tool icon="fiboTime" label="斐波纳契扩展" />
          <Tool icon="arrows" label="箭头" drop />
        </ToolGroup>
        <ToolGroup>
          <Grip $wide />
          {["M1", "M5", "M15", "M30", "H1", "H4", "D1", "W1", "MN"].map((p) => (
            <PeriodButton key={p} type="button" $pressed={p === "M15"}>{p}</PeriodButton>
          ))}
        </ToolGroup>
      </ToolRow>

      <ChartArea>
        <Pane $height={394}>
          <PaneSvg role="img" aria-label="AUDUSD.co,M15">
            <g transform="translate(-2 -101)">
              <DayLines top={101} bottom={493} />
              <path d="M2 163.500H4000" stroke="#778899" />
              {earlyCandles.map((c) => <Bar key={c.x} c={c} />)}
              {candles.map((c) => <Bar key={c.x} c={c} />)}
              <path d="M2 188l8 3" stroke="#ff0000" strokeWidth="2" />
              <path d="M2 192h8" stroke="#ffff00" strokeWidth="2" />
              <path d="M2 200h8" stroke="#0000ff" strokeWidth="2" />
              <path d="M2 211h8" stroke="#9400d3" strokeWidth="2" />
              {averages.map((a) => (
                <polyline key={a.color} points={a.points} fill="none" stroke={a.color} strokeWidth="2" />
              ))}
              <path d="M1492 101h10l-5 5z" fill="#778899" />
            </g>
          </PaneSvg>
          <PaneTitle><TitleArrow />AUDUSD.co,M15&nbsp; 0.79416 0.79431 0.79413 0.79430</PaneTitle>
          <StatsPanel />
          <PanelMark />
          <Contact $x={419} $y={123}>QQ:468891354</Contact>
        </Pane>
        <Oscillator title="Stoch(14,3,7) 41.9169 29.7344" top={496} data={slow} levels={[510, 552]} />
        <Oscillator title="Stoch(8,3,3) 77.6504 49.8367" top={569} data={fast} levels={[583, 625]} />
        <Macd />
        <TimeAxis>
          {AXIS.map((t) => <TimeLabel key={t}>{t}</TimeLabel>)}
        </TimeAxis>
      </ChartArea>

      <ChartTabs>
        {CHART_TABS.map((t, i) => <ChartTab key={t} type="button" $active={i === 0}>{t}</ChartTab>)}
      </ChartTabs>

      <Dock>
        <Side>
          <CloseButton type="button" aria-label="关闭">
            <svg width="7" height="7" viewBox="0 0 7 7" aria-hidden="true">
              <path d="M1 1l5 5M6 1L1 6" stroke="#000" strokeWidth="1.500" />
            </svg>
          </CloseButton>
          <SideLabel>终端</SideLabel>
        </Side>
        <Main>
          <Orders>
            <colgroup>
              {COLUMNS.map(([, width], i) => <col key={i} width={width} />)}
              <col />
            </colgroup>
            <thead>
              <tr>
                {COLUMNS.map(([name], i) => (
                  <HeadCell key={i} scope="col" $first={i === 0}>
                    {name}
                    {i === 1 && (
                      <SortMark width="8" height="8" viewBox="0 0 8 8" aria-hidden="true">
                        <path d="M1 8l3-7" stroke="#888" />
                        <path d="M4 1l3 7H1" fill="none" stroke="#ddd" />
                      </SortMark>
                    )}
                  </HeadCell>
                ))}
                <HeadCell as="td" />
              </tr>
            </thead>
            <tbody>
              {ORDERS.map((order, r) => (
                <Row key={order[0]} $odd={r % 2 === 1} $selected={r === SELECTED}>
                  {order.map((value, i) => (
                    <Cell key={i} $hit={i === 6 && STOPPED.includes(r)}>
                      {i === 0 ? <Ticket><Doc sell={order[2] === "sell"} />{value}</Ticket> : value}
                    </Cell>
                  ))}
                  <Cell $blank />
                </Row>
              ))}
            </tbody>
          </Orders>
          <Balance>
            <svg width="8" height="8" viewBox="0 0 8 8" aria-hidden="true">
              <circle cx="4" cy="4" r="3" fill="none" stroke="#888" />
              <path d="M2 6l4-4" stroke="#888" />
            </svg>
            <BalanceItems>
              <span>盈/亏: 414.90</span>
              <span>信用额: 0.00</span>
              <span>存款: 0.00</span>
              <span>取款: 0.00</span>
            </BalanceItems>
            <BalanceTotal>414.90</BalanceTotal>
          </Balance>
          <DockTabs>
            {DOCK_TABS.map((t) => (
              <DockTab key={t} type="button" $active={t === "账户历史"}>
                {t}
                {t === "邮箱" && <Count>6</Count>}
              </DockTab>
            ))}
          </DockTabs>
        </Main>
        <OrdersMark />
        <Contact $x={844} $y={93}>QQ：468891354</Contact>
      </Dock>
      <StatusLine />
      <Watermark>外汇EA之家 www.eazhijia.com</Watermark>
    </Window>
  );
}
